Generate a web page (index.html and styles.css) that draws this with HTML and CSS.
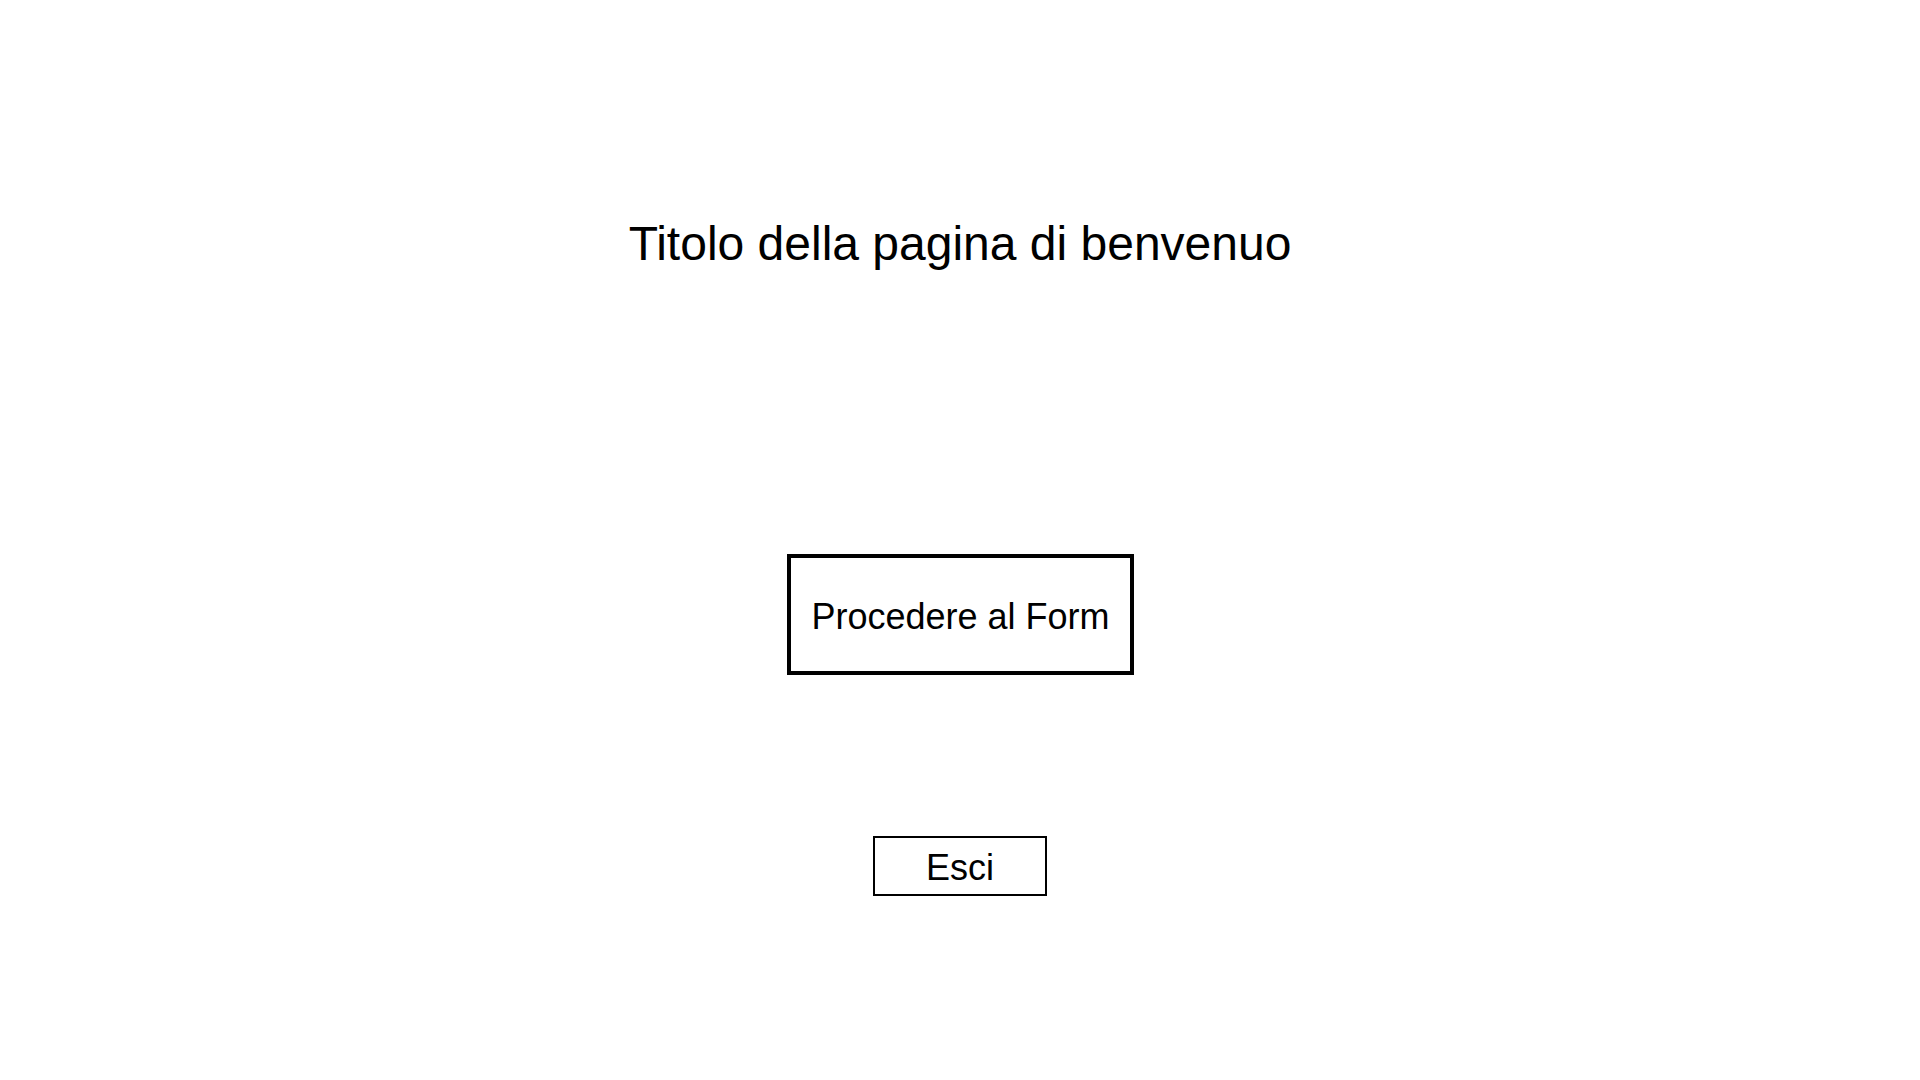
FILE: index.html
```html
<!DOCTYPE html>
<html lang="it">
<head>
<meta charset="utf-8">
<title>Benvenuto</title>
<link rel="stylesheet" href="styles.css">
</head>
<body>
<main class="page">
  <h1 class="title">Titolo della pagina di benvenuo</h1>
  <button class="btn btn-primary" type="button">Procedere al Form</button>
  <button class="btn btn-exit" type="button">Esci</button>
</main>
</body>
</html>
```

FILE: styles.css
```css
html, body {
  margin: 0;
  padding: 0;
  background: #ffffff;
}

body {
  font-family: "Liberation Sans", Arial, sans-serif;
  color: #000000;
}

.page {
  display: flex;
  flex-direction: column;
  align-items: center;
  padding-top: 220px;
  min-height: 1080px;
  box-sizing: border-box;
}

.title {
  margin: 0 0 286px 0;
  font-size: 48px;
  font-weight: normal;
  line-height: 48px;
}

.btn {
  display: flex;
  align-items: center;
  justify-content: center;
  box-sizing: border-box;
  background: #ffffff;
  color: #000000;
  font-family: "Liberation Sans", Arial, sans-serif;
  padding: 0;
  margin: 0;
  border-style: solid;
  border-color: #000000;
  border-radius: 0;
  cursor: pointer;
}

.btn-primary {
  width: 347px;
  height: 121px;
  border-width: 4px;
  font-size: 36px;
  margin-left: 1px;
  padding-top: 4px;
}

.btn-exit {
  margin-top: 161px;
  width: 174px;
  height: 60px;
  border-width: 2px;
  font-size: 36px;
  padding-top: 3px;
}
```
